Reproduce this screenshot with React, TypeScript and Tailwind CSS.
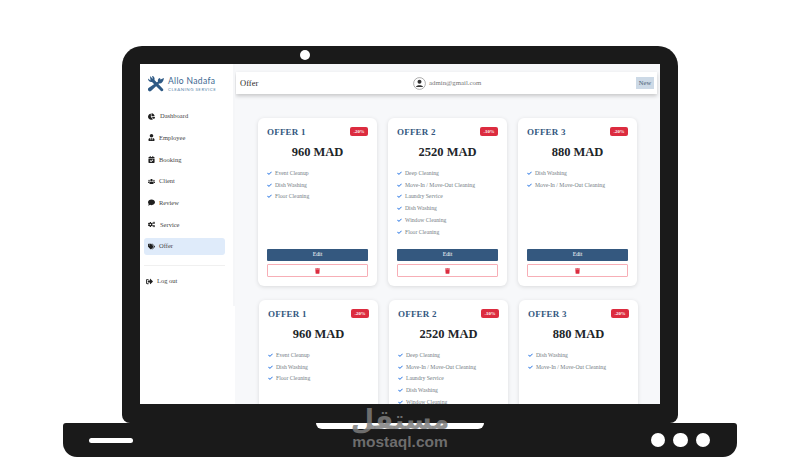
import { ComponentType } from 'react'
import {
  FaChartPie,
  FaUserTie,
  FaCalendarCheck,
  FaUsers,
  FaComment,
  FaCogs,
  FaTags,
  FaSignOutAlt,
  FaCheck,
  FaTrash,
} from 'react-icons/fa'

interface NavItem {
  label: string
  icon: ComponentType<{ className?: string }>
  gap: string
  active?: boolean
}

interface Offer {
  title: string
  discount: string
  price: string
  features: string[]
}

const navItems: NavItem[] = [
  { label: 'Dashboard', icon: FaChartPie, gap: 'gap-[5px]' },
  { label: 'Employee', icon: FaUserTie, gap: 'gap-[4px]' },
  { label: 'Booking', icon: FaCalendarCheck, gap: 'gap-[4px]' },
  { label: 'Client', icon: FaUsers, gap: 'gap-[4px]' },
  { label: 'Review', icon: FaComment, gap: 'gap-[4px]' },
  { label: 'Service', icon: FaCogs, gap: 'gap-[5px]' },
  { label: 'Offer', icon: FaTags, gap: 'gap-[4px]', active: true },
]

const offers: Offer[] = [
  {
    title: 'OFFER 1',
    discount: '-20%',
    price: '960 MAD',
    features: ['Event Cleanup', 'Dish Washing', 'Floor Cleaning'],
  },
  {
    title: 'OFFER 2',
    discount: '-10%',
    price: '2520 MAD',
    features: [
      'Deep Cleaning',
      'Move-In / Move-Out Cleaning',
      'Laundry Service',
      'Dish Washing',
      'Window Cleaning',
      'Floor Cleaning',
    ],
  },
  {
    title: 'OFFER 3',
    discount: '-20%',
    price: '880 MAD',
    features: ['Dish Washing', 'Move-In / Move-Out Cleaning'],
  },
]

function Logo() {
  return (
    <div className="flex items-center gap-[3px] pl-[7px] pt-[11px]">
      <svg width="18" height="18" viewBox="0 0 18 18" className="shrink-0">
        <path d="M3 1 L6 4 L5 1 C7 1 8 3 7.5 5 L16 14 C17 15 15.5 17 14 16 L5 7 C3 7.5 1 6 1 3.5 L3.5 5.5 Z" fill="#2f5a85" />
        <path d="M17 3 L13.5 4.5 L13 3 C11 3.5 10.5 5 11 6.5 L1.5 13 C0 14.5 2 17.5 4 16 L12 8.5 C14.5 9 16.5 6.5 17 3 Z" fill="#2f5a85" />
      </svg>
      <div className="flex flex-col">
        <span className="font-['Lato',sans-serif] text-[8.5px] leading-[10px] tracking-[0.35px] text-[#3a6690]">Allo Nadafa</span>
        <span className="font-['Lato',sans-serif] text-[4.4px] leading-[7px] tracking-[0.5px] text-[#5c86ab]">CLEANING SERVICE</span>
      </div>
    </div>
  )
}

function Sidebar() {
  return (
    <aside className="relative flex w-[95px] shrink-0 flex-col bg-white">
      <Logo />
      <nav className="ml-[4px] mr-[10px] mt-[14.5px] flex flex-col gap-[4.7px]">
        {navItems.map((item) => {
          const Icon = item.icon
          return (
            <div
              key={item.label}
              className={`flex h-[17px] items-center rounded-[3px] pl-[4px] text-[6.5px] text-[#444] ${item.gap} ${
                item.active ? 'bg-[#dfebfa]' : ''
              }`}
            >
              <Icon className="h-[7px] w-auto text-[#1f1f1f]" />
              <span>{item.label}</span>
            </div>
          )
        })}
      </nav>
      <div className="ml-[4px] mr-[10px] mt-[10px] h-[1px] bg-[#f0f0f0]" />
      <div className="mt-[7px] flex h-[17px] items-center gap-[4px] pl-[6px] text-[6.5px] text-[#444]">
        <FaSignOutAlt className="h-[7px] w-auto text-[#1f1f1f]" />
        <span>Log out</span>
      </div>
      <div className="absolute right-0 top-0 h-[242px] w-[2px] bg-[#f5f6f8]" />
    </aside>
  )
}

function Header() {
  return (
    <header className="ml-[1px] mr-[3px] mt-[8px] flex h-[22px] shrink-0 items-center justify-between bg-white pl-[4px] pr-[3px] shadow-[0_2px_4px_rgba(0,0,0,0.2)]">
      <span className="text-[8.5px] font-medium text-[#2b2b2b]">Offer</span>
      <div className="flex items-center gap-[3px]">
        <svg width="13" height="13" viewBox="0 0 13 13">
          <circle cx="6.5" cy="6.5" r="5.9" fill="none" stroke="#8a8a8a" strokeWidth="0.7" />
          <circle cx="6.5" cy="4.7" r="2" fill="#333" />
          <path d="M3 10 C3 7.8 10 7.8 10 10 Z" fill="#333" />
        </svg>
        <span className="text-[6.8px] text-[#777]">admin@gmail.com</span>
      </div>
      <span className="flex h-[12px] w-[18px] items-center justify-center bg-[#ccd9e6] text-[6.5px] text-[#4b5f74]">New</span>
    </header>
  )
}

function OfferCard({ offer }: { offer: Offer }) {
  return (
    <div className="flex h-[168px] flex-col rounded-[6px] bg-white px-[9px] pt-[9px] shadow-[0_1px_4px_rgba(0,0,0,0.12)]">
      <div className="flex items-start justify-between">
        <span className="text-[9px] font-bold leading-[11px] tracking-[0.2px] text-[#34587f]">{offer.title}</span>
        <span className="flex h-[9px] w-[18px] items-center justify-center rounded-[2px] bg-[#dc2c3f] text-[4.8px] font-bold text-white">
          {offer.discount}
        </span>
      </div>
      <div className="mt-[6.5px] text-center text-[12.5px] font-bold leading-[15px] text-[#212529]">{offer.price}</div>
      <ul className="mt-[9.5px] flex flex-col gap-[3.8px]">
        {offer.features.map((feature) => (
          <li key={feature} className="flex h-[8px] items-center gap-[3px] text-[5.7px] text-[#757d85]">
            <FaCheck className="h-[4.5px] w-[5px] shrink-0 text-[#3b82e6]" />
            <span>{feature}</span>
          </li>
        ))}
      </ul>
      <div className="mt-auto mb-[9px] flex flex-col gap-[3px]">
        <button className="h-[12px] rounded-[1px] bg-[#34587f] text-[5.8px] leading-none text-white">Edit</button>
        <button className="flex h-[13px] items-center justify-center rounded-[1px] border border-[#f7aeb6] bg-white">
          <FaTrash className="h-[6px] w-[5px] text-[#dc2c3f]" />
        </button>
      </div>
    </div>
  )
}

function Screen() {
  return (
    <div className="flex h-[340px] w-[520px] overflow-hidden bg-white font-['Liberation_Serif',serif]">
      <Sidebar />
      <main className="flex min-w-0 flex-1 flex-col bg-[#f7f8fa]">
        <Header />
        <div className="pl-[23px] pt-[24px]">
          <div className="grid grid-cols-[119px_119px_119px] gap-x-[11px]">
            {offers.map((offer) => (
              <OfferCard key={offer.title} offer={offer} />
            ))}
          </div>
          <div className="ml-[1px] mt-[14px] grid grid-cols-[119px_119px_119px] gap-x-[11px]">
            {offers.map((offer) => (
              <OfferCard key={offer.title} offer={offer} />
            ))}
          </div>
        </div>
      </main>
    </div>
  )
}

export default function App() {
  return (
    <div className="relative flex h-[460px] w-[800px] flex-col items-center overflow-hidden bg-white pt-[46px]">
      {/* lid */}
      <div className="relative h-[377px] w-[556px] rounded-t-[20px] rounded-b-[8px] bg-[#1a1a1a] px-[18px] pt-[18px]">
        <div className="absolute left-[178px] top-[4px] h-[10px] w-[10px] rounded-full bg-white" />
        <Screen />
      </div>
      {/* base */}
      <div className="relative flex h-[34px] w-[674px] items-center justify-between rounded-t-[3px] rounded-b-[14px] bg-[#1a1a1a] pl-[26px] pr-[27px]">
        <div className="h-[5px] w-[44px] rounded-full bg-white" />
        <div className="flex gap-[8px]">
          <div className="h-[14.5px] w-[14.5px] rounded-full bg-white" />
          <div className="h-[14.5px] w-[14.5px] rounded-full bg-white" />
          <div className="h-[14.5px] w-[14.5px] rounded-full bg-white" />
        </div>
        <div className="absolute left-[253px] top-0 h-[6px] w-[168px] rounded-b-[6px] bg-white" />
      </div>
      {/* watermark */}
      <div className="absolute left-[340px] top-[406px] flex w-[120px] flex-col items-center text-[#7d7d7d]/85">
        <span dir="rtl" className="font-['DejaVu_Sans',sans-serif] text-[27px] font-bold leading-[28px]">مستقل</span>
        <span className="font-['Liberation_Sans',sans-serif] text-[15.5px] font-bold leading-[16px]">mostaql.com</span>
      </div>
    </div>
  )
}
